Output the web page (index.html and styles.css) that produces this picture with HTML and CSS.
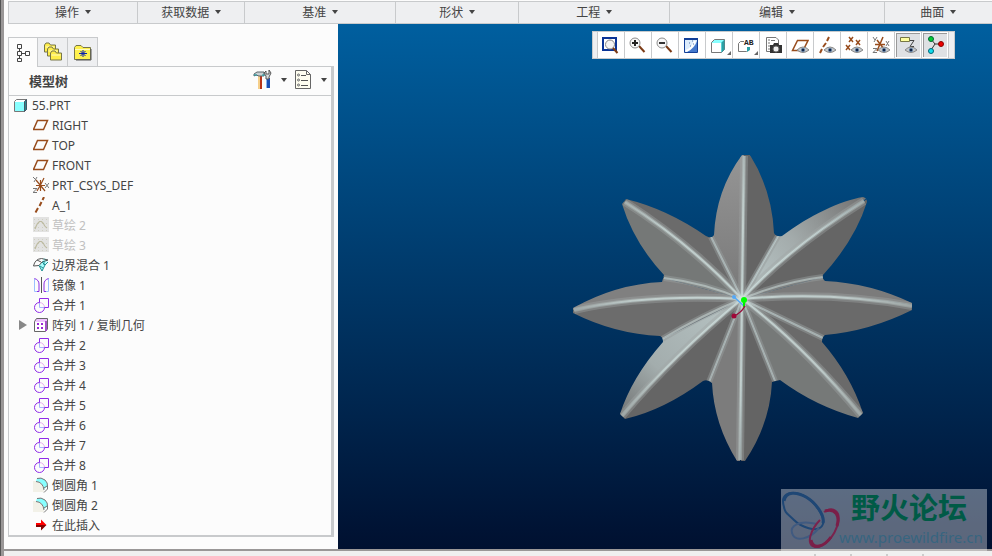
FILE: index.html
```
<!DOCTYPE html>
<html lang="zh-CN">
<head>
    <meta charset="UTF-8">
    <meta name="viewport" content="width=device-width, initial-scale=1.0">
    <title>55.PRT</title>
    <link rel="stylesheet" href="styles.css">
</head>
<body>
    <!-- shared icons -->
    <svg class="defs" width="0" height="0" aria-hidden="true">
        <symbol id="i-part" viewBox="0 0 16 16">
            <path d="M1.500 4.500 3.500 2.500H13.500V12.500L11.500 14.500H1.500z" fill="#fff" stroke="#777"/>
            <path d="M11.500 4.500 13.500 2.500V12.500L11.500 14.500z" fill="#2b8a8e" stroke="#456"/>
            <path d="M2 5h9v9H2z" fill="#8ff"/>
        </symbol>
        <symbol id="i-plane" viewBox="0 0 16 16">
            <path d="M4.500 3.500H14.500L10.500 12.500H.5z" fill="none" stroke="#984c1c" stroke-width="1.500"/>
        </symbol>
        <symbol id="i-csys" viewBox="0 0 16 16">
            <path d="M3 8.500H12M3 3l9 11M11 1 7.500 8 4 14M7.500 3v11" fill="none" stroke="#984c1c" stroke-width="1.200"/>
            <path d="M0 0l2 2M4 0 1 5M12 6l4 5M16 6l-4 5M0 11.500h4l-4 4h4" fill="none" stroke="#777"/>
        </symbol>
        <symbol id="i-axis" viewBox="0 0 16 16">
            <path d="M11 0 9.500 3M8.500 5 6.500 9M5 11 2.500 15.500" fill="none" stroke="#984c1c" stroke-width="2"/>
        </symbol>
        <symbol id="i-sketch" viewBox="0 0 16 16">
            <path d="M0 0h16v15H0z" fill="#e2e2e1"/>
            <path d="M1 2.500h14M1 6.500h14M1 10.500h14M1 13.500h14" stroke="#cfcfc2" stroke-dasharray="1 3"/>
            <path d="M2 12Q3 9 4.500 6.500L6.500 4.500H8.500L10.500 6.500Q11 9 14 11" fill="none" stroke="#bcbaa0" stroke-width="1.200"/>
        </symbol>
        <symbol id="i-blend" viewBox="0 0 16 16">
            <path d="M9 5 11 1 15 3 12 8 9 14 6 8.500z" fill="#aff"/>
            <path d="M.5 9Q2 2 8.500 1.500L15 3M.5 9 6 8.500 9 5 15 3M4 3l4 2" fill="none" stroke="#555"/>
            <path d="M6 8.500 9 14l3-6 3-3M9 5l3 3M7 9l3 2M11 4v4" fill="none" stroke="#1f8f92"/>
        </symbol>
        <symbol id="i-mirror" viewBox="0 0 16 16">
            <path d="M1.500 1.500V14.500H6M15.500 1.500V14.500H11" fill="none" stroke="#9cc0ff"/>
            <path d="M1.500 1.500Q6 3 6 7V14.500H4M15.500 1.500Q11 3 11 7V14.500H13" fill="none" stroke="#8a2be2"/>
            <path d="M8.500 0V16" stroke="#555"/>
        </symbol>
        <symbol id="i-merge" viewBox="0 0 16 16">
            <path d="M6.500 5V10.500H11" fill="none" stroke="#a7b4ff"/>
            <path d="M6.500 5.500A5 5 0 0 1 11.500 10.500" fill="none" stroke="#e8aef0"/>
            <path d="M6.500 5.500V1.500H15.500V10.500H11.500A5 5 0 1 1 6.500 5.500" fill="none" stroke="#8f2ae8"/>
        </symbol>
        <symbol id="i-pattern" viewBox="0 0 16 16">
            <path d="M1.500 4.500 3.500 1.500H14.500V12L12.500 14.500H1.500z" fill="#eec4ff" stroke="#666"/>
            <path d="M2 5h10v9H2z" fill="#fff"/>
            <path d="M13 4v10" stroke="#a350c8" stroke-width="2"/>
            <path d="M4 6h2v2H4zM8 6h2v2H8zM4 10h2v2H4zM8 10h2v2H8z" fill="#9c27d8"/>
        </symbol>
        <symbol id="i-round" viewBox="0 0 16 16">
            <path d="M0 4h6q5 1 5 11H0z" fill="#f2f1e8"/>
            <path d="M4 1.500Q8 0 12 3q3 3 2.500 6L11 12Q10 5 3 4z" fill="#8ff"/>
            <path d="M4 1.500Q8 0 12 3q3 3 2.500 6v3L11 15.500M3 4.500Q10 5 11 13M11 11l3-2" fill="none" stroke="#777"/>
        </symbol>
        <symbol id="i-insert" viewBox="0 0 16 16">
            <path d="M3 6h5V2.500L13.500 8H3z" fill="#f00"/>
            <path d="M3 8h10.500L8 13.500V10H3z" fill="#800"/>
        </symbol>
        <symbol id="i-folder" viewBox="0 0 12 10">
            <path d="M.5 9.500V2.500L2 .5H5L6.500 2.500H11.500V9.500z" fill="#ffee4a" stroke="#77764a"/>
            <path d="M1.500 4.500H10.500" stroke="#fffbc0"/>
        </symbol>
        <symbol id="i-eye" viewBox="0 0 12 8">
            <path d="M0 4Q6-2 12 4 6 9 0 4z" fill="#c5c9cc" stroke="#888"/>
            <circle cx="6" cy="4" r="2" fill="#4d7099"/>
            <path d="M5 3h2v2H5z" fill="#124"/>
        </symbol>
        <symbol id="i-lens" viewBox="0 0 18 18">
            <path d="M10 10 15.500 16" stroke="#7c3b16" stroke-width="2"/>
            <circle cx="6" cy="7" r="5" fill="#f7f7f7" stroke="#8d8d8d"/>
        </symbol>
    </svg>

    <div class="app">
        <nav class="ribbon">
            <button class="g1">操作<i class="caret"></i></button>
            <button class="g2">获取数据<i class="caret"></i></button>
            <button class="g3">基准<i class="caret"></i></button>
            <button class="g4">形状<i class="caret"></i></button>
            <button class="g5">工程<i class="caret"></i></button>
            <button class="g6">编辑<i class="caret"></i></button>
            <button class="g7">曲面<i class="caret"></i></button>
        </nav>

        <main class="main">
            <aside class="navigator">
                <div class="tabs">
                    <button class="tab active" aria-label="模型树">
                        <svg width="14" height="20" viewBox="0 0 14 20" fill="none" stroke="#444"><path d="M1.500 1.500h4v4h-4zM1.500 8.500h4v4h-4zM1.500 15.500h4v3h-4zM9.500 8.500h4v4h-4zM3.500 5.500v3M3.500 12.500v3M5.500 10.500h4"/></svg>
                    </button>
                    <button class="tab" aria-label="文件夹浏览器">
                        <svg width="20" height="20" viewBox="0 0 20 20"><use href="#i-folder" x="1" y="0" width="12" height="11"/><use href="#i-folder" x="4" y="4" width="12" height="11"/><use href="#i-folder" x="7" y="8" width="12" height="11"/></svg>
                    </button>
                    <button class="tab" aria-label="收藏夹">
                        <svg width="18" height="18" viewBox="0 0 18 18"><path d="M.5 16.500V4.500L2 2.500H7L9 4.500H16.500V16.500z" fill="#fff14d" stroke="#77764a"/><path d="M1 6.500h15" stroke="#fffbc0"/><path d="M17 6v11H2" fill="none" stroke="#555"/><path d="M5 10.500h8M9 7v7M6.500 8l5 5M11.500 8l-5 5" stroke="#0a1fae"/></svg>
                    </button>
                </div>

                <section class="panel">
                    <div class="panel-head">
                        <h2>模型树</h2>
                        <button class="menu" aria-label="设置">
                            <svg width="20" height="20" viewBox="0 0 20 20"><path d="M5 6h4v13H5z" fill="#b8341a"/><path d="M5 6h2v13H5z" fill="#f5cf8a"/><path d="M1 6V4l3-2h7v4H6L3 5z" fill="#c8d1d4" stroke="#5c666a"/><path d="M1 5h3M9 5h3" stroke="#18a0a8"/><path d="M13 8h4v10h-4z" fill="#1b4fb4"/><path d="M13 8h1v10h-1z" fill="#88b4f0"/><path d="M13 9V6l-2-3 2-2v3h3V0l2 3-2 4v2z" fill="#d8dcde" stroke="#555"/></svg>
                            <i class="caret"></i>
                        </button>
                        <button class="menu" aria-label="显示">
                            <svg width="18" height="20" viewBox="0 0 18 20"><path d="M.5 .5H11.500L15.500 4.500V18.500H.5z" fill="#fffef0" stroke="#666"/><path d="M11.500 .5V4.500H15.500" fill="none" stroke="#666"/><path d="M6 5.500h5M6 10.500h7M6 15.500h7" stroke="#555"/><g fill="#fff" stroke="#666"><circle cx="3.500" cy="5" r="1"/><circle cx="3.500" cy="10" r="1"/><circle cx="3.500" cy="15" r="1"/></g></svg>
                            <i class="caret"></i>
                        </button>
                    </div>

                    <ul class="tree">
                        <li class="root"><svg class="icon"><use href="#i-part"/></svg>55.PRT</li>
                        <li><svg class="icon"><use href="#i-plane"/></svg>RIGHT</li>
                        <li><svg class="icon"><use href="#i-plane"/></svg>TOP</li>
                        <li><svg class="icon"><use href="#i-plane"/></svg>FRONT</li>
                        <li><svg class="icon"><use href="#i-csys"/></svg>PRT_CSYS_DEF</li>
                        <li><svg class="icon"><use href="#i-axis"/></svg>A_1</li>
                        <li class="hidden"><svg class="icon"><use href="#i-sketch"/></svg>草绘 2</li>
                        <li class="hidden"><svg class="icon"><use href="#i-sketch"/></svg>草绘 3</li>
                        <li><svg class="icon"><use href="#i-blend"/></svg>边界混合 1</li>
                        <li><svg class="icon"><use href="#i-mirror"/></svg>镜像 1</li>
                        <li><svg class="icon"><use href="#i-merge"/></svg>合并 1</li>
                        <li class="group"><button class="expand" aria-label="展开"></button><svg class="icon"><use href="#i-pattern"/></svg>阵列 1 / 复制几何</li>
                        <li><svg class="icon"><use href="#i-merge"/></svg>合并 2</li>
                        <li><svg class="icon"><use href="#i-merge"/></svg>合并 3</li>
                        <li><svg class="icon"><use href="#i-merge"/></svg>合并 4</li>
                        <li><svg class="icon"><use href="#i-merge"/></svg>合并 5</li>
                        <li><svg class="icon"><use href="#i-merge"/></svg>合并 6</li>
                        <li><svg class="icon"><use href="#i-merge"/></svg>合并 7</li>
                        <li><svg class="icon"><use href="#i-merge"/></svg>合并 8</li>
                        <li><svg class="icon"><use href="#i-round"/></svg>倒圆角 1</li>
                        <li><svg class="icon"><use href="#i-round"/></svg>倒圆角 2</li>
                        <li><svg class="icon"><use href="#i-insert"/></svg>在此插入</li>
                    </ul>
                </section>
            </aside>

            <div class="canvas">
                <svg class="model" viewBox="338 24 654 525">
                    <defs>
                        <linearGradient id="ne" gradientUnits="userSpaceOnUse" x1="760" y1="280" x2="860" y2="200">
                            <stop offset="0" stop-color="#b4c0c0"/><stop offset=".4" stop-color="#a3abab"/><stop offset="1" stop-color="#757575"/>
                        </linearGradient>
                        <linearGradient id="sw" gradientUnits="userSpaceOnUse" x1="720" y1="310" x2="622" y2="412">
                            <stop offset="0" stop-color="#b4c0c0"/><stop offset=".6" stop-color="#a3adad"/><stop offset="1" stop-color="#757878"/>
                        </linearGradient>
                        <linearGradient id="n" gradientUnits="userSpaceOnUse" x1="740" y1="155" x2="735" y2="300">
                            <stop offset="0" stop-color="#959595"/><stop offset="1" stop-color="#787878"/>
                        </linearGradient>
                        <!-- highlights fade out towards the petal tips -->
                        <radialGradient id="shine" gradientUnits="userSpaceOnUse" cx="742" cy="299" r="172">
                            <stop offset="0" stop-color="#d6e6e4"/><stop offset=".6" stop-color="#d0dfdd"/><stop offset="1" stop-color="#a0a8a7"/>
                        </radialGradient>
                        <!-- ridges down the middle of each petal -->
                        <g id="ridges" fill="none">
                            <path d="M744 156 742 299"/>
                            <path d="M740 460 742 299"/>
                            <path d="M625 202Q691 244 742 299"/>
                            <path d="M864 201Q788 249 742 299"/>
                            <path d="M574 310Q646 294 742 299"/>
                            <path d="M912 306Q830 291 742 299"/>
                            <path d="M622 416Q675 354 742 299"/>
                            <path d="M861 415Q801 343 742 299"/>
                        </g>
                        <g id="valleys" fill="none">
                            <path d="M711 237 742 299"/>
                            <path d="M778 236 742 299"/>
                            <path d="M664 278Q705 283 742 299"/>
                            <path d="M823 277Q782 282 742 299"/>
                            <path d="M662 339Q702 315 742 299"/>
                            <path d="M823 338 742 299"/>
                            <path d="M709 382 742 299"/>
                            <path d="M775 381 742 299"/>
                        </g>
                        <clipPath id="outline">
                            <path d="M742 155H750Q772 190 774 233Q776 237 782 236C810 215 840 201 863 197Q867 198 867 202Q855 240 823 275Q822 279 825 281Q870 283 912 303V310Q870 331 825 335Q822 337 822 342Q850 374 863 413L858 418Q815 406 780 380L772 382Q770 424 745 461H737Q714 424 712 383Q708 379 703 381Q664 410 625 419L620 414Q632 377 663 342Q663 337 660 336Q615 334 573 313V308Q616 284 662 282L664 275Q634 243 622 204L626 199Q667 209 706 236Q712 239 714 235Q716 190 742 155z"/>
                        </clipPath>
                    </defs>
                    <g clip-path="url(#outline)">
                        <path d="M744 150 742 299 711 237 700 200z" fill="url(#n)"/>
                        <path d="M744 150 742 299 778 236 790 190z" fill="#646464"/>
                        <path d="M778 236 742 299Q788 249 870 196L840 180z" fill="url(#ne)"/>
                        <path d="M870 197Q788 249 742 299L823 277 880 240z" fill="#656565"/>
                        <path d="M823 277 742 299Q830 291 920 306L880 270z" fill="#7b7b7b"/>
                        <path d="M920 306Q830 291 742 299L823 338 900 340z" fill="#6a6a6a"/>
                        <path d="M823 338 742 299Q801 343 866 421L880 380z" fill="#6a6a6a"/>
                        <path d="M866 421Q801 343 742 299L775 381 810 430z" fill="#767978"/>
                        <path d="M775 381 742 299 741 470 790 440z" fill="#646464"/>
                        <path d="M740 470 742 299 709 382 700 440z" fill="#7c7c7c"/>
                        <path d="M709 382 742 299Q675 354 618 420L660 430z" fill="#656565"/>
                        <path d="M618 420Q675 354 742 299L662 339 600 380z" fill="url(#sw)"/>
                        <path d="M662 339 742 299Q646 294 565 312L610 350z" fill="#6c6c6c"/>
                        <path d="M565 312Q646 294 742 299L664 278 580 280z" fill="#808080"/>
                        <path d="M664 278 742 299Q691 244 618 197L600 240z" fill="#757877"/>
                        <path d="M618 197Q691 244 742 299L711 237 670 190z" fill="#6b6b6b"/>
                        <use href="#ridges" class="ridge-wide"/>
                        <use href="#valleys" class="valley-wide"/>
                        <use href="#ridges" class="ridge"/>
                        <use href="#valleys" class="valley"/>
                        <use href="#ridges" class="ridge-core"/>
                    </g>
                    <path d="M734 297 744 306" stroke="#55a8f5" stroke-width="1.500"/>
                    <path d="M744 300V307" stroke="#0e0" stroke-width="2"/>
                    <path d="M745 306Q741 313 734 316" fill="none" stroke="#96103c" stroke-width="1.500"/>
                    <circle cx="734" cy="297" r="2" fill="#55a8f5"/>
                    <circle cx="744" cy="300" r="3" fill="#0f0"/>
                    <circle cx="734" cy="316" r="2.500" fill="#a00738"/>
                </svg>

                <div class="toolbar">
                    <button aria-label="重新调整"><svg viewBox="0 0 18 18"><path d="M1 2h13v12H1z" fill="#fff" stroke="#0b3496" stroke-width="2"/><circle cx="8" cy="8.500" r="4.500" fill="#f4f4f4" stroke="#858585"/><path d="M11 12 15.500 17" stroke="#7c3b16" stroke-width="2"/></svg></button>
                    <button aria-label="放大"><svg viewBox="0 0 18 18"><use href="#i-lens"/><path d="M3 7h6M6 4v6" stroke="#222" stroke-width="2"/></svg></button>
                    <button aria-label="缩小"><svg viewBox="0 0 18 18"><use href="#i-lens"/><path d="M3 7h6" stroke="#333" stroke-width="2"/></svg></button>
                    <button aria-label="重画"><svg viewBox="0 0 18 18"><path d="M1.500 2.500h13v14h-13z" fill="#dcecfc"/><path d="M14 5V16H4Q12 12 14 5z" fill="#4478cc"/><path d="M3 15Q9 13 12 5" fill="none" stroke="#fff" stroke-width="2"/><path d="M6 7h1M9 5h1M7 10h1M10 8h1" stroke="#5577aa"/><path d="M1.500 2.500h13v14h-13z" fill="none" stroke="#123f98"/><path d="M1 3h14" stroke="#123f98" stroke-width="2"/></svg></button>
                    <button aria-label="显示样式" class="more"><svg viewBox="0 0 18 18"><path d="M1.500 6.500 4.500 3.500H14.500V13.500L11.500 16.500H1.500z" fill="#8ff" stroke="#777"/><path d="M2 7h9v9H2z" fill="#fff"/><path d="M11.500 6.500V16.500L14.500 13.500V3.500z" fill="#2ba0a5"/></svg></button>
                    <button aria-label="已命名视图" class="more"><svg viewBox="0 0 18 18"><path d="M7 5.500H3.500L1.500 7.500V15.500H9.500L11.500 13.500V11" fill="#fff" stroke="#777"/><path d="M10 11h3v3l-3 2z" fill="#2ba0a5"/><text x="7" y="9" class="ab">AB</text></svg></button>
                    <button aria-label="视图管理器"><svg viewBox="0 0 18 18"><path d="M2.500 1.500H12L14.500 4V15.500H2.500z" fill="#fff" stroke="#777"/><path d="M4 4h2M4 7h2M4 10h2M4 13h2M7 4.500h4" stroke="#777"/><path d="M6 9h3l1-2h4l1 2h3v8H6z" fill="#333"/><circle cx="12" cy="13" r="3" fill="#eee" stroke="#666"/></svg></button>
                    <button aria-label="平面显示"><svg viewBox="0 0 18 18"><path d="M6.500 4.500H17L12 14.500H1.500z" fill="#fff" stroke="#984c1c" stroke-width="1.500"/><use href="#i-eye" x="6" y="10" width="12" height="8"/></svg></button>
                    <button aria-label="轴显示"><svg viewBox="0 0 18 18"><path d="M11 1 9 5M8 7 5 11M4 13 2 17" stroke="#984c1c" stroke-width="2"/><use href="#i-eye" x="6" y="10" width="12" height="8"/></svg></button>
                    <button aria-label="点显示"><svg viewBox="0 0 18 18"><path d="M4 1 8 6M8 1 4 6M11 4l4 5M15 4l-4 5M1 9l4 5M5 9l-4 5" stroke="#984c1c" stroke-width="1.500"/><use href="#i-eye" x="6" y="10" width="12" height="8"/></svg></button>
                    <button aria-label="坐标系显示"><svg viewBox="0 0 18 18"><path d="M3 8.500H13M5 4l7 9M11 1 5 15" stroke="#984c1c" stroke-width="1.500"/><path d="M1 1l2 3M5 1 2 6M14 5l3 5M17 5l-3 5M1 12.500h4l-4 4h4" fill="none" stroke="#777"/><use href="#i-eye" x="6" y="10" width="12" height="8"/></svg></button>
                    <button aria-label="注释显示" class="on"><svg viewBox="0 0 18 18"><path d="M1.500 1.500h9v4h-9z" fill="#ffffa0" stroke="#777745"/><path d="M11 4.500H15L11 10.500h4" fill="none" stroke="#444"/><use href="#i-eye" x="6" y="10" width="12" height="8"/></svg></button>
                    <button aria-label="旋转中心" class="on"><svg viewBox="0 0 18 18"><path d="M5 3 9 8H15M9 8 5 14" fill="none" stroke="#333"/><circle cx="5" cy="3" r="2.500" fill="#0c3" stroke="#063"/><circle cx="15" cy="8" r="2.500" fill="#e00" stroke="#800"/><circle cx="5" cy="15" r="2.500" fill="#1de" stroke="#067"/></svg></button>
                </div>

                <div class="watermark">
                    <svg viewBox="0 0 60 62" width="60" height="62" fill="none">
                        <path d="M3 18C-1 5 8 1 21 6S46 30 41 37 20 38 13 31 4 24 3 18z" stroke="#1f4775" stroke-width="2"/>
                        <path d="M3 12C5 2 16 3 25 8S44 26 42 34" stroke="#1f4775" stroke-width="3"/>
                        <path d="M36 35C17 30 9 38 11 44 14 54 29 50 38 39" stroke="#405a80" stroke-width="2"/>
                        <path d="M43 23C52 17 60 22 57 34 54 47 43 59 34 58 24 56 30 40 39 31" stroke="#7a234d" stroke-width="2"/>
                        <path d="M44 22C55 19 59 27 56 37M30 51C32 61 43 58 50 48" stroke="#7a1f48" stroke-width="3"/>
                    </svg>
                    <div class="brand">
                        <strong>野火论坛</strong>
                        <span>www.proewildfire.cn</span>
                    </div>
                </div>
            </div>
        </main>

        <footer class="status">
            <i></i><i></i><i></i><i></i>
        </footer>
    </div>
</body>
</html>
```
FILE: styles.css
```
* {
    box-sizing: border-box;
}

body {
    margin: 0;
    font-family: "Noto Sans", "Noto Sans CJK SC", sans-serif;
    font-size: 12px;
    color: #444;
    background-color: #fcfcfc;
}

button {
    margin: 0;
    padding: 0;
    border: none;
    background: none;
    font: inherit;
    color: inherit;
    cursor: pointer;
}

.defs {
    position: absolute;
}

.app {
    display: flex;
    flex-direction: column;
    min-height: 100vh;
    padding-left: 3px;
    border-left: 1px solid #555;
    box-shadow: inset 3px 0 #9a9797;
    overflow: hidden;
}

.caret {
    display: inline-block;
    border: 3px solid transparent;
    border-top: 4px solid #444;
    border-bottom: none;
}

/* ribbon groups */
.ribbon {
    display: flex;
    height: 24px;
    padding-top: 1px;
    margin-left: 4px;
}

.ribbon button {
    display: flex;
    align-items: center;
    justify-content: center;
    gap: 6px;
    flex-basis: 0;
    padding-bottom: 2px;
    border: 1px solid #c8cacc;
    border-width: 1px 0 1px 1px;
    background-color: #eeeff1;
}

.g1 { flex-grow: 129; }
.g2 { flex-grow: 107; }
.g3 { flex-grow: 151; }
.g4 { flex-grow: 123; }
.g5 { flex-grow: 151; }
.g6 { flex-grow: 215; }
.g7 { flex-grow: 108; }

.main {
    display: flex;
    flex: 1;
}

/* left side */
.navigator {
    display: flex;
    flex-direction: column;
    width: 334px;
    padding: 13px 4px 12px;
}

.tabs {
    display: flex;
    height: 29px;
}

.tab {
    display: flex;
    align-items: center;
    justify-content: center;
    width: 30px;
    border: 1px solid #c8cacc;
    border-width: 1px 1px 0 0;
    background-color: #eeeff1;
}

.tab.active {
    border-left-width: 1px;
    margin-bottom: -1px;
    background-color: #fcfcfc;
    z-index: 1;
}

.panel {
    flex: 1;
    border: 1px solid #c8cacc;
    border-right-width: 3px;
    border-bottom-width: 2px;
}

.panel-head {
    display: flex;
    align-items: center;
    gap: 8px;
    height: 29px;
    padding: 0 4px 2px 20px;
    border-bottom: 1px solid #c8cacc;
}

.panel-head h2 {
    flex: 1;
    margin: 0;
    font-size: 13px;
}

.menu {
    display: flex;
    align-items: center;
    gap: 8px;
}

.tree {
    list-style: none;
    margin: -1px 0 0;
    padding: 0;
}

.tree li {
    display: flex;
    align-items: center;
    gap: 3px;
    height: 20px;
    padding-left: 24px;
    white-space: pre;
}

.tree .root {
    padding-left: 4px;
}

.tree .group {
    padding-left: 10px;
}

.tree .hidden {
    color: #c0c0c0;
}

.icon {
    flex: none;
    width: 16px;
    height: 16px;
}

.expand {
    width: 11px;
    height: 10px;
}

.expand::before {
    content: "";
    display: block;
    width: 0;
    border: 5px solid transparent;
    border-left: 8px solid #888;
    border-right: none;
}

/* graphics area */
.canvas {
    position: relative;
    flex: 1;
    background: linear-gradient(#005f9f, #001030);
}

.model {
    position: absolute;
    width: 100%;
    height: 100%;
}

.ridge-wide { stroke: #a0a6a5; stroke-width: 8; stroke-opacity: .4; }
.ridge { stroke: #b0bcba; stroke-width: 4; stroke-opacity: .5; }
.ridge-core { stroke: url(#shine); stroke-width: 2; stroke-opacity: .7; }
.valley-wide { stroke: #969c9b; stroke-width: 6; stroke-opacity: .5; }
.valley { stroke: url(#shine); stroke-width: 2; stroke-opacity: .5; }

.toolbar {
    position: absolute;
    top: 7px;
    right: 37px;
    display: flex;
    height: 28px;
    padding: 0 5px 0 4px;
    border: 1px solid #c8cacc;
    background-color: #eeeff1;
}

.toolbar button {
    position: relative;
    display: flex;
    align-items: center;
    justify-content: center;
    width: 27px;
    border-left: 1px solid #c8cacc;
    background-color: #fff;
}

.toolbar button:last-child {
    width: 28px;
    border-right: 1px solid #c8cacc;
}

.toolbar svg {
    width: 18px;
    height: 18px;
}

.toolbar .more::after {
    content: "";
    position: absolute;
    right: 1px;
    bottom: 3px;
    border: 2px solid #666;
    border-top-color: transparent;
    border-left-color: transparent;
}

.toolbar .on {
    background-color: #dfe1e4;
    box-shadow: inset 0 0 0 1px #fff, inset 2px 2px #999;
}

.ab {
    font: bold 8px "Liberation Mono", monospace;
    fill: #222;
}

.watermark {
    position: absolute;
    right: 5px;
    bottom: -2px;
    display: flex;
    width: 206px;
    height: 62px;
    background-color: rgba(255, 255, 255, .36);
    z-index: 1;
}

.brand {
    display: flex;
    flex-direction: column;
    margin-left: -2px;
}

.brand strong {
    padding-left: 12px;
    font-size: 29px;
    line-height: 38px;
    color: #005a46;
}

.brand span {
    font-size: 15px;
    line-height: 20px;
    color: #376580;
}

.status {
    display: flex;
    justify-content: flex-end;
    gap: 34px;
    height: 7px;
    padding: 3px 68px 0 0;
    border-top: 2px solid #9a9797;
    background-color: #f0f0f0;
}

.status i {
    width: 2px;
    background-color: #ccc;
}
```
